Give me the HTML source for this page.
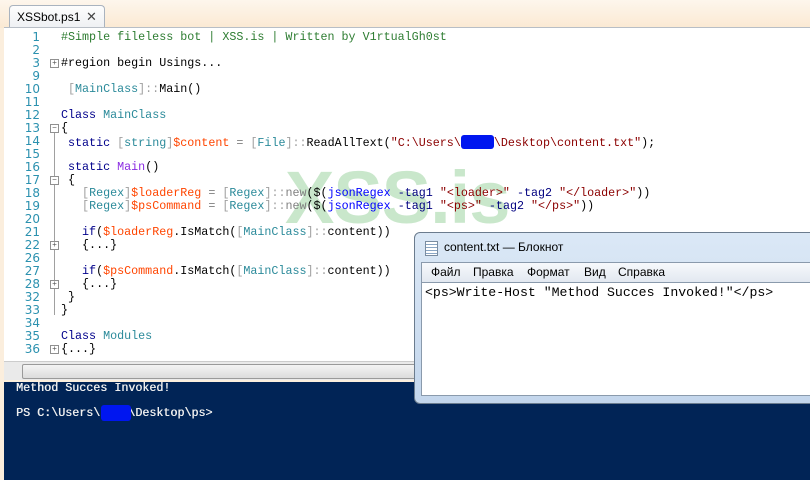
<!DOCTYPE html>
<html><head><meta charset="utf-8"><style>
body{margin:0;width:810px;height:480px;overflow:hidden;position:relative;background:#fbeedd;font-family:"Liberation Sans",sans-serif}
.top{position:absolute;left:0;top:0;width:810px;height:28px;background:linear-gradient(#fdf6ec,#fbe9d3)}
.tab{position:absolute;left:9px;top:5px;width:96px;height:23px;background:linear-gradient(#fdfdfd,#eef0f3);border:1px solid #a9b3bf;border-bottom:none;border-radius:4px 4px 0 0;font-size:12px;line-height:22px;padding-left:7px;box-sizing:border-box;color:#000}
.tab span{position:absolute;left:76px;top:0;font-size:13px;color:#444}
.ed{position:absolute;left:4px;top:27px;width:806px;height:334px;background:#fff;border-top:1px solid #b8bec6}
.wm{position:absolute;left:281px;top:127px;font:bold 74px "Liberation Sans",sans-serif;color:#c9e7cb;letter-spacing:-1px}
.r{position:absolute;left:0;height:13px;font:11.7px/13px "Liberation Mono",monospace;white-space:pre;color:#000}
.n{position:absolute;width:36px;text-align:right;color:#2b91af;font:12px/13px "DejaVu Sans",sans-serif;left:0}
.c{position:absolute;left:57px}
.f{position:absolute;left:46px;width:7px;height:7px;border:1px solid #909090;font:8px/7px monospace;color:#555;text-align:center;background:#fff;margin-top:2px}
.g{color:#2e7d32}.t{color:#2b8a9a}.b{color:#a0a0a0}.k{color:#00008b}.v{color:#ff4500}.s{color:#8b0000}.j{color:#0000ff}.p{color:#000080}.m{color:#8a2be2}.o{color:#808080}
.vl{position:absolute;left:50px;width:1px;background:#a0a0a0}
.sb{position:absolute;left:4px;top:361px;width:412px;height:18px;background:#eaeaea;border-top:1px solid #ccc}
.sb div{position:absolute;left:18px;top:2px;width:392px;height:13px;background:linear-gradient(#f4f4f4,#dcdcdc);border:1px solid #9a9a9a;border-radius:2px}
.con{position:absolute;left:4px;top:382px;width:794px;height:98px;background:#012456;color:#eee;font:11.7px/12.5px "Liberation Mono",monospace;white-space:pre;padding-left:12px;text-shadow:0.4px 0 0 #eee}
.np{position:absolute;left:414px;top:232px;width:400px;height:170px;background:linear-gradient(#dbe8f6,#c3d6ec);border:1px solid #6b7c8e;border-radius:6px}
.np .ti{position:absolute;left:29px;top:7px;font-size:12px;color:#000}
.np .ic{position:absolute;left:10px;top:8px;width:11px;height:13px;border:1px solid #7a8ca0;background:repeating-linear-gradient(#fff 0 2px,#8aa6c4 2px 3px)}
.mn{position:absolute;left:6px;top:29px;width:394px;height:19px;background:linear-gradient(#f7f9fc,#e2e8f0);border:1px solid #8a9aac;border-bottom:none;font-size:12px;line-height:19px}
.mn span{position:absolute;top:0}
.ta{position:absolute;left:6px;top:49px;width:394px;height:114px;background:#fff;border:1px solid #8a9aac;font:13.2px/14px "Liberation Mono",monospace;padding:3px 0 0 3px;box-sizing:border-box;white-space:pre}
.bl{display:inline-block;background:#0016f0;border-radius:3px;width:33px;height:14px;vertical-align:-3px}
.blot{position:absolute;background:#0016f0;border-radius:3px}
</style></head><body>
<div class="top"></div>
<div class="tab">XSSbot.ps1<span>✕</span></div>
<div class="ed">
<div class="wm">XSS.is</div>
<div class="vl" style="top:104px;height:183px"></div>
<div class="r" style="top:3px;width:806px"><span class="n">1</span><span class="c g">#Simple fileless bot | XSS.is | Written by V1rtualGh0st</span></div>
<div class="r" style="top:16px"><span class="n">2</span></div>
<div class="r" style="top:29px"><span class="n">3</span><span class="f">+</span><span class="c">#region begin Usings...</span></div>
<div class="r" style="top:42px"><span class="n">9</span></div>
<div class="r" style="top:55px"><span class="n">10</span><span class="c"> <span class="b">[</span><span class="t">MainClass</span><span class="b">]::</span>Main()</span></div>
<div class="r" style="top:68px"><span class="n">11</span></div>
<div class="r" style="top:81px"><span class="n">12</span><span class="c"><span class="k">Class</span> <span class="t">MainClass</span></span></div>
<div class="r" style="top:94px"><span class="n">13</span><span class="f">−</span><span class="c">{</span></div>
<div class="r" style="top:107px"><span class="n">14</span><span class="c"> <span class="k">static</span> <span class="b">[</span><span class="t">string</span><span class="b">]</span><span class="v">$content</span> <span class="o">=</span> <span class="b">[</span><span class="t">File</span><span class="b">]::</span>ReadAllText(<span class="s">"C:\Users\<span class="bl"></span>\Desktop\content.txt"</span>);</span></div>
<div class="r" style="top:120px"><span class="n">15</span></div>
<div class="r" style="top:133px"><span class="n">16</span><span class="c"> <span class="k">static</span> <span class="m">Main</span>()</span></div>
<div class="r" style="top:146px"><span class="n">17</span><span class="f">−</span><span class="c"> {</span></div>
<div class="r" style="top:159px"><span class="n">18</span><span class="c">   <span class="b">[</span><span class="t">Regex</span><span class="b">]</span><span class="v">$loaderReg</span> <span class="o">=</span> <span class="b">[</span><span class="t">Regex</span><span class="b">]::</span><span class="o">new</span>($(<span class="j">jsonRegex</span> <span class="p">-tag1</span> <span class="s">"&lt;loader&gt;"</span> <span class="p">-tag2</span> <span class="s">"&lt;/loader&gt;"</span>))</span></div>
<div class="r" style="top:172px"><span class="n">19</span><span class="c">   <span class="b">[</span><span class="t">Regex</span><span class="b">]</span><span class="v">$psCommand</span> <span class="o">=</span> <span class="b">[</span><span class="t">Regex</span><span class="b">]::</span><span class="o">new</span>($(<span class="j">jsonRegex</span> <span class="p">-tag1</span> <span class="s">"&lt;ps&gt;"</span> <span class="p">-tag2</span> <span class="s">"&lt;/ps&gt;"</span>))</span></div>
<div class="r" style="top:185px"><span class="n">20</span></div>
<div class="r" style="top:198px"><span class="n">21</span><span class="c">   <span class="k">if</span>(<span class="v">$loaderReg</span>.IsMatch(<span class="b">[</span><span class="t">MainClass</span><span class="b">]::</span>content))</span></div>
<div class="r" style="top:211px"><span class="n">22</span><span class="f">+</span><span class="c">   {...}</span></div>
<div class="r" style="top:224px"><span class="n">26</span></div>
<div class="r" style="top:237px"><span class="n">27</span><span class="c">   <span class="k">if</span>(<span class="v">$psCommand</span>.IsMatch(<span class="b">[</span><span class="t">MainClass</span><span class="b">]::</span>content))</span></div>
<div class="r" style="top:250px"><span class="n">28</span><span class="f">+</span><span class="c">   {...}</span></div>
<div class="r" style="top:263px"><span class="n">32</span><span class="c"> }</span></div>
<div class="r" style="top:276px"><span class="n">33</span><span class="c">}</span></div>
<div class="r" style="top:289px"><span class="n">34</span></div>
<div class="r" style="top:302px"><span class="n">35</span><span class="c"><span class="k">Class</span> <span class="t">Modules</span></span></div>
<div class="r" style="top:315px"><span class="n">36</span><span class="f">+</span><span class="c">{...}</span></div>
</div>
<div class="sb"><div></div></div>
<div class="con">Method Succes Invoked!

PS C:\Users\    \Desktop\ps&gt;</div>
<div class="blot" style="left:101px;top:405px;width:30px;height:16px"></div>
<div class="np">
<div class="ic"></div><div class="ti">content.txt — Блокнот</div>
<div class="mn"><span style="left:9px">Файл</span><span style="left:51px">Правка</span><span style="left:105px">Формат</span><span style="left:162px">Вид</span><span style="left:196px">Справка</span></div>
<div class="ta">&lt;ps&gt;Write-Host "Method Succes Invoked!"&lt;/ps&gt;</div>
</div>
</body></html>
